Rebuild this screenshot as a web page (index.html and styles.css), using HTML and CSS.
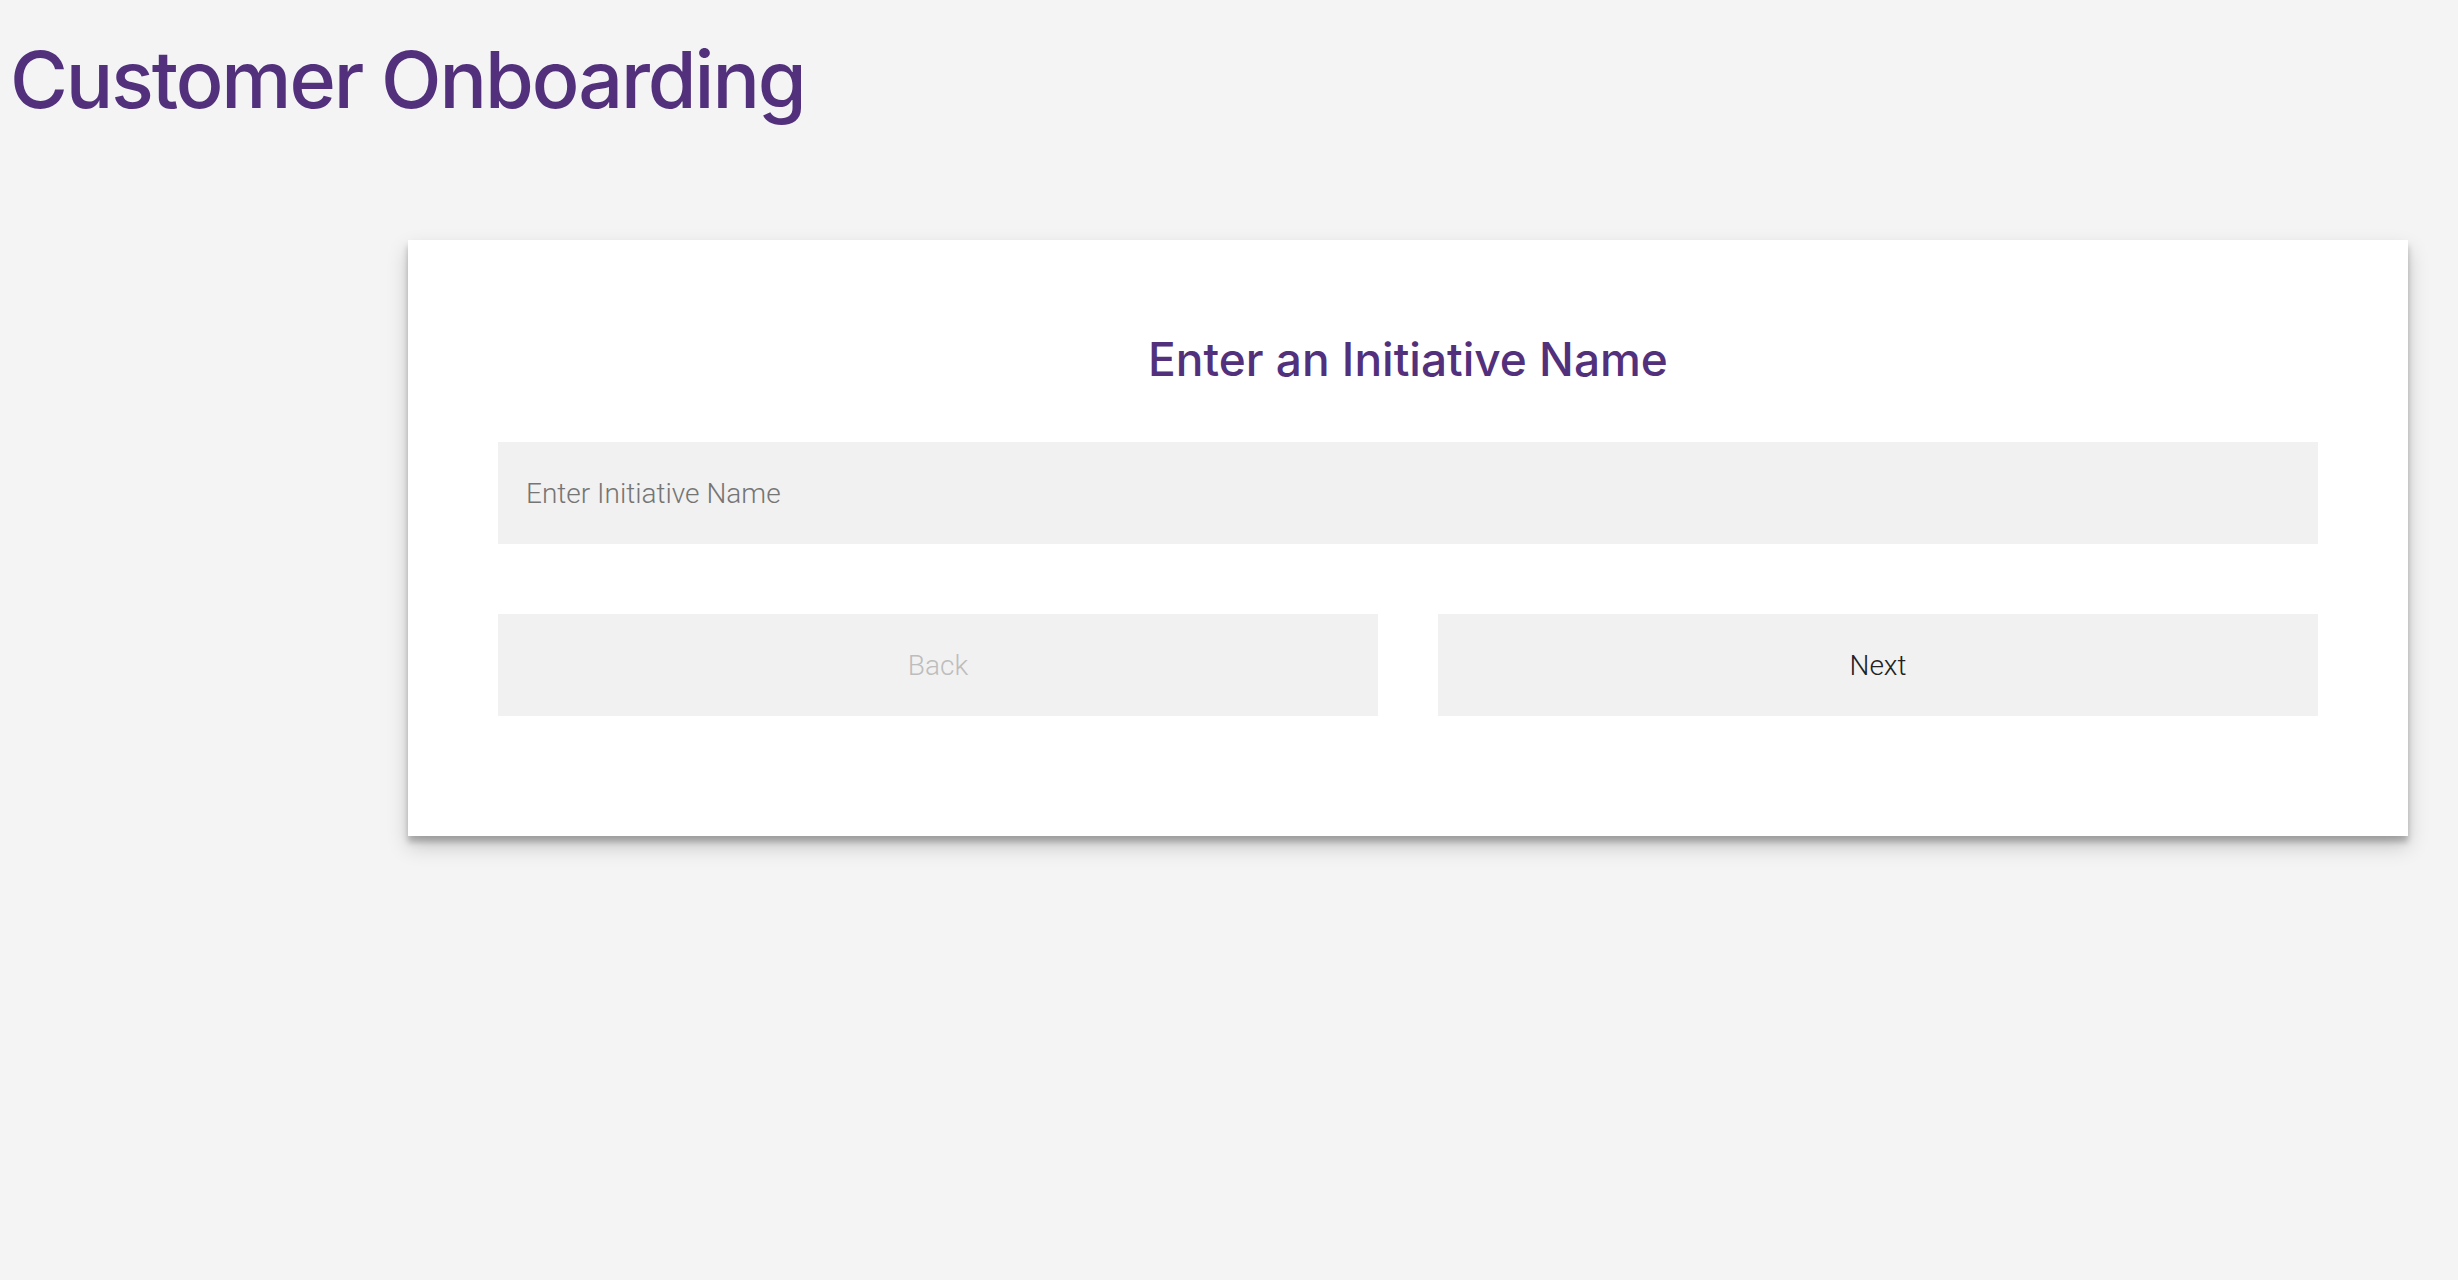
FILE: index.html
```html
<!DOCTYPE html>
<html lang="en">
<head>
<meta charset="utf-8">
<title>Customer Onboarding</title>
<link rel="stylesheet" href="styles.css">
</head>
<body>
  <header class="page-header">
    <h1 class="page-title">Customer Onboarding</h1>
  </header>
  <main class="content">
    <section class="card">
      <h2 class="card-title">Enter an Initiative Name</h2>
      <input class="text-input" type="text" placeholder="Enter Initiative Name">
      <div class="actions">
        <button class="btn btn-disabled" type="button">Back</button>
        <button class="btn" type="button">Next</button>
      </div>
    </section>
  </main>
</body>
</html>
```
FILE: styles.css
```css
html, body {
  margin: 0;
  padding: 0;
}
body {
  background: #f4f4f4;
  font-family: Roboto, "Noto Sans", sans-serif;
  min-height: 1280px;
}
.page-header {
  padding: 33px 0 0 10px;
}
.page-title {
  margin: 0;
  font-family: Inter, "Liberation Sans", Arial, sans-serif;
  font-weight: 500;
  font-size: 79px;
  line-height: 92px;
  letter-spacing: -2.1px;
  color: #52307c;
}
.content {
  margin: 115px 50px 0 408px;
}
.card {
  background: #ffffff;
  padding: 91px 90px 120px;
  box-shadow: 0 10px 20px rgba(0, 0, 0, 0.19), 0 6px 6px rgba(0, 0, 0, 0.23);
}
.card-title {
  margin: 0;
  text-align: center;
  font-family: Inter, Roboto, sans-serif;
  font-weight: 500;
  font-size: 46px;
  line-height: 56px;
  letter-spacing: 0;
  color: #52307c;
}
.text-input {
  display: block;
  box-sizing: border-box;
  width: 100%;
  height: 102px;
  margin-top: 55px;
  padding: 0 28px;
  border: none;
  outline: none;
  background: #f1f1f1;
  font-family: Roboto, sans-serif;
  font-weight: 300;
  font-size: 28px;
  color: #333;
}
.text-input::placeholder {
  color: #757575;
  opacity: 1;
}
.actions {
  display: grid;
  grid-template-columns: 1fr 1fr;
  column-gap: 60px;
  margin-top: 70px;
}
.btn {
  height: 102px;
  border: none;
  background: #f1f1f1;
  font-family: Roboto, sans-serif;
  font-weight: 300;
  font-size: 28px;
  color: #212121;
  padding: 0;
}
.btn-disabled {
  color: #bdbdbd;
}
```
